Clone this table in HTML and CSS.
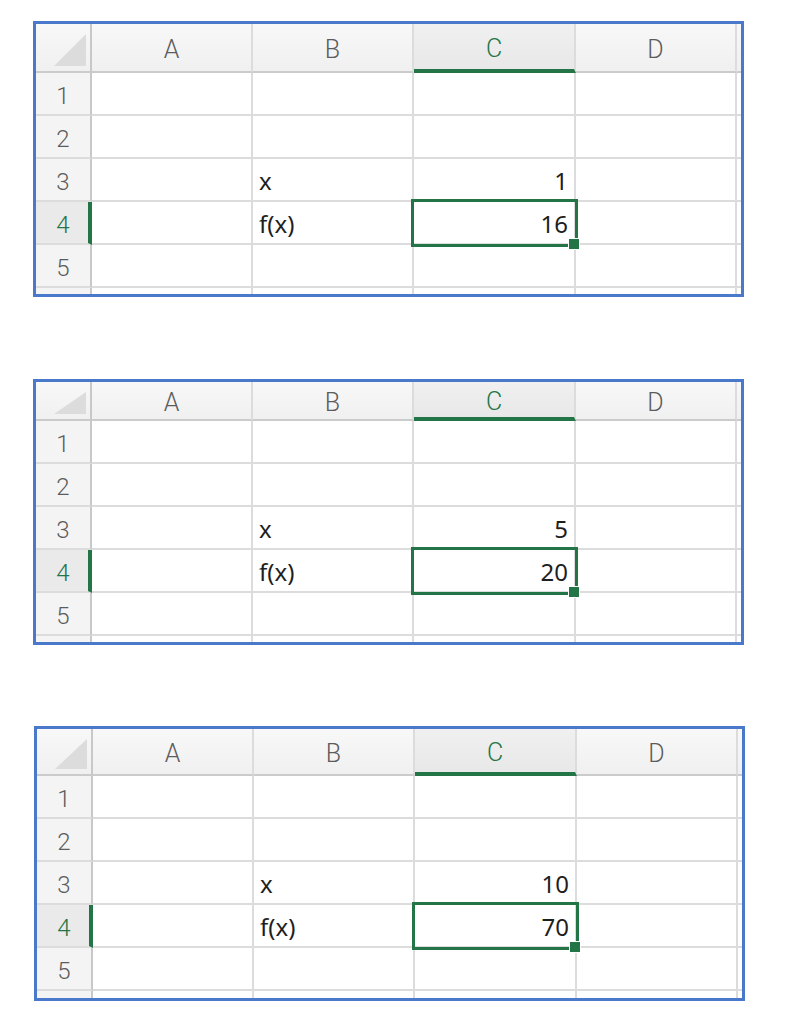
FILE: index.html
```html
<!DOCTYPE html>
<html lang="en">
<head>
<meta charset="utf-8">
<title>Sheets</title>
<link rel="stylesheet" href="styles.css">
</head>
<body>
<main class="page">

  <section class="sheet sheet-1">
    <div class="cell corner"><span class="tri"></span></div>
    <div class="cell col-hd">A</div>
    <div class="cell col-hd">B</div>
    <div class="cell col-hd sel">C</div>
    <div class="cell col-hd">D</div>
    <div class="cell col-hd tail-c"></div>

    <div class="cell row-hd">1</div><div class="cell"></div><div class="cell"></div><div class="cell"></div><div class="cell"></div><div class="cell tail-c"></div>
    <div class="cell row-hd">2</div><div class="cell"></div><div class="cell"></div><div class="cell"></div><div class="cell"></div><div class="cell tail-c"></div>
    <div class="cell row-hd">3</div><div class="cell"></div><div class="cell txt">x</div><div class="cell num">1</div><div class="cell"></div><div class="cell tail-c"></div>
    <div class="cell row-hd sel">4</div><div class="cell"></div><div class="cell txt">f(x)</div><div class="cell num active">16<span class="handle"></span></div><div class="cell"></div><div class="cell tail-c"></div>
    <div class="cell row-hd">5</div><div class="cell"></div><div class="cell"></div><div class="cell"></div><div class="cell"></div><div class="cell tail-c"></div>
    <div class="cell row-hd tail-r"></div><div class="cell tail-r"></div><div class="cell tail-r"></div><div class="cell tail-r"></div><div class="cell tail-r"></div><div class="cell tail-r tail-c"></div>
  </section>

  <section class="sheet sheet-2">
    <div class="cell corner"><span class="tri"></span></div>
    <div class="cell col-hd">A</div>
    <div class="cell col-hd">B</div>
    <div class="cell col-hd sel">C</div>
    <div class="cell col-hd">D</div>
    <div class="cell col-hd tail-c"></div>

    <div class="cell row-hd">1</div><div class="cell"></div><div class="cell"></div><div class="cell"></div><div class="cell"></div><div class="cell tail-c"></div>
    <div class="cell row-hd">2</div><div class="cell"></div><div class="cell"></div><div class="cell"></div><div class="cell"></div><div class="cell tail-c"></div>
    <div class="cell row-hd">3</div><div class="cell"></div><div class="cell txt">x</div><div class="cell num">5</div><div class="cell"></div><div class="cell tail-c"></div>
    <div class="cell row-hd sel">4</div><div class="cell"></div><div class="cell txt">f(x)</div><div class="cell num active">20<span class="handle"></span></div><div class="cell"></div><div class="cell tail-c"></div>
    <div class="cell row-hd">5</div><div class="cell"></div><div class="cell"></div><div class="cell"></div><div class="cell"></div><div class="cell tail-c"></div>
    <div class="cell row-hd tail-r"></div><div class="cell tail-r"></div><div class="cell tail-r"></div><div class="cell tail-r"></div><div class="cell tail-r"></div><div class="cell tail-r tail-c"></div>
  </section>

  <section class="sheet sheet-3">
    <div class="cell corner"><span class="tri"></span></div>
    <div class="cell col-hd">A</div>
    <div class="cell col-hd">B</div>
    <div class="cell col-hd sel">C</div>
    <div class="cell col-hd">D</div>
    <div class="cell col-hd tail-c"></div>

    <div class="cell row-hd">1</div><div class="cell"></div><div class="cell"></div><div class="cell"></div><div class="cell"></div><div class="cell tail-c"></div>
    <div class="cell row-hd">2</div><div class="cell"></div><div class="cell"></div><div class="cell"></div><div class="cell"></div><div class="cell tail-c"></div>
    <div class="cell row-hd">3</div><div class="cell"></div><div class="cell txt">x</div><div class="cell num">10</div><div class="cell"></div><div class="cell tail-c"></div>
    <div class="cell row-hd sel">4</div><div class="cell"></div><div class="cell txt">f(x)</div><div class="cell num active">70<span class="handle"></span></div><div class="cell"></div><div class="cell tail-c"></div>
    <div class="cell row-hd">5</div><div class="cell"></div><div class="cell"></div><div class="cell"></div><div class="cell"></div><div class="cell tail-c"></div>
    <div class="cell row-hd tail-r"></div><div class="cell tail-r"></div><div class="cell tail-r"></div><div class="cell tail-r"></div><div class="cell tail-r"></div><div class="cell tail-r tail-c"></div>
  </section>

</main>
</body>
</html>
```

FILE: styles.css
```css
html, body {
  margin: 0;
  padding: 0;
  background: #ffffff;
}

.page {
  display: flex;
  flex-direction: column;
  align-items: flex-start;
  padding-top: 21px;
}

.sheet {
  --hdr: 49px;
  --tail: 6px;
  display: grid;
  grid-template-columns: 56px 161px 161px 162px 161px 4px;
  grid-template-rows: var(--hdr) 43px 43px 43px 43px 43px var(--tail);
  width: 705px;
  border: 3px solid #4a79cb;
  margin-left: 33px;
  background: #ffffff;
  overflow: hidden;
}

.sheet-1 { --hdr: 49px; --tail: 6px; }
.sheet-2 { --hdr: 39px; --tail: 6px; margin-top: 82px; }
.sheet-3 { --hdr: 47px; --tail: 7px; margin-top: 81px; margin-left: 34px; }

.cell {
  box-sizing: border-box;
  border-right: 2px solid #dcdcdc;
  border-bottom: 2px solid #dcdcdc;
  display: flex;
  align-items: center;
  min-width: 0;
  font-family: "Noto Sans", "Open Sans", sans-serif;
  font-size: 24px;
  color: #1e1e1e;
  line-height: 1;
}

.tail-c { border-right: none; }
.tail-r { border-bottom: none; }

.col-hd {
  justify-content: center;
  background: linear-gradient(#f8f8f8, #f0f0f0);
  border-bottom-color: #cbcbcb;
  font-family: "Roboto", "Liberation Sans", Arial, sans-serif;
  font-weight: 300;
  font-size: 25px;
  color: #5c5c5c;
  padding-top: 3px;
}

.col-hd.sel {
  background: linear-gradient(#f0f0f0, #e8e8e8);
  border-bottom: 4px solid #237548;
  color: #237548;
}

.corner {
  background: linear-gradient(#f8f8f8, #f0f0f0);
  border-right-color: #c8c8c8;
  border-bottom-color: #cbcbcb;
  justify-content: flex-end;
  align-items: flex-end;
  padding: 4px 4px 5px 0;
}

.tri {
  display: block;
  width: 32px;
  height: calc(var(--hdr) - 17px);
  max-height: 32px;
  background: #dcdcdc;
  clip-path: polygon(100% 0, 100% 100%, 0 100%);
}

.row-hd {
  justify-content: center;
  background: #f4f4f4;
  border-right-color: #c8c8c8;
  border-bottom-color: #dcdcdc;
  font-family: "Roboto", "Liberation Sans", Arial, sans-serif;
  font-weight: 300;
  font-size: 24px;
  color: #5c5c5c;
  padding-top: 4px;
}

.row-hd.sel {
  background: #eaeaea;
  border-right: 4px solid #237548;
  color: #237548;
  padding-left: 2px;
}

.txt {
  padding-left: 6px;
  padding-top: 3px;
}

.num {
  justify-content: flex-end;
  padding-right: 6px;
  padding-top: 3px;
}

.active {
  position: relative;
}

.active::after {
  content: "";
  position: absolute;
  left: -3px;
  top: -3px;
  right: -4px;
  bottom: -4px;
  border: 3px solid #237548;
  pointer-events: none;
}

.handle {
  position: absolute;
  right: -6px;
  bottom: -7px;
  width: 10px;
  height: 10px;
  background: #237548;
  border: 1px solid #ffffff;
  z-index: 2;
}
```
